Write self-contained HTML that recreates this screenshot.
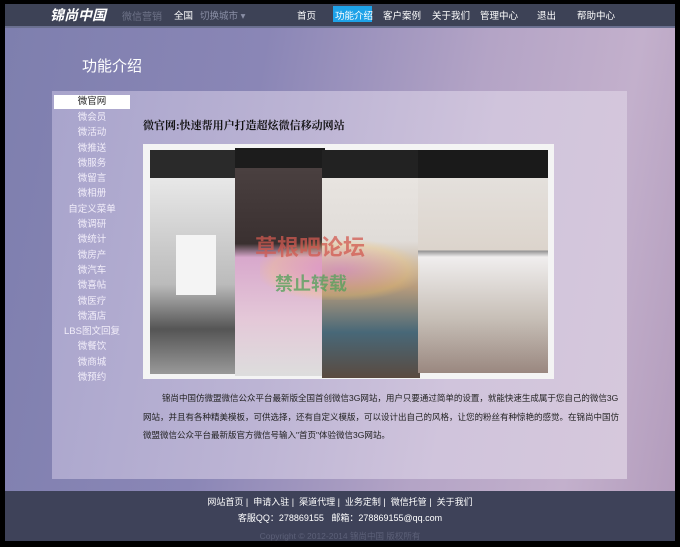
<!DOCTYPE html>
<html><head><meta charset="utf-8"><style>
*{margin:0;padding:0;box-sizing:border-box}
body{width:680px;height:547px;background:#000;font-family:"Liberation Sans","Noto Sans CJK SC",sans-serif;position:relative;overflow:hidden}
.abs{position:absolute}
#hdr{left:5px;top:4px;width:670px;height:24px;background:#3d4256;border-bottom:2px solid #6b7090}
#main{left:5px;top:28px;width:670px;height:463px;background:linear-gradient(100deg,#7e7fae 0%,#8a86b6 35%,#b4a4c6 65%,#c3b0cc 85%,#b39cbc 100%)}
#panel{left:52px;top:91px;width:575px;height:388px;background:linear-gradient(100deg,#a8a4cc 0%,#bcb4d4 40%,#d0c4dc 70%,#d6c8dc 100%)}
#foot{left:5px;top:491px;width:670px;height:50px;background:#3e4259}
.nav{top:8px;font-size:9.5px;color:#fff}
.side{left:54px;width:76px;text-align:center;font-size:9.5px;color:#f2eefa;line-height:14px}
</style></head><body>
<div id="hdr" class="abs"></div>
<div class="abs" style="left:50px;top:5px;font-size:14px;font-weight:bold;font-style:italic;color:#fff">锦尚中国</div>
<div class="abs" style="left:122px;top:8px;font-size:10px;color:#6e7388">微信营销</div>
<div class="abs nav" style="left:174px">全国</div>
<div class="abs nav" style="left:200px;color:#8a8fa6">切换城市 ▾</div>
<div class="abs nav" style="left:297px">首页</div>
<div class="abs" style="left:333px;top:6px;width:39px;height:16px;background:#1ea2e8"></div>
<div class="abs nav" style="left:335px">功能介绍</div>
<div class="abs nav" style="left:383px">客户案例</div>
<div class="abs nav" style="left:432px">关于我们</div>
<div class="abs nav" style="left:480px">管理中心</div>
<div class="abs nav" style="left:537px">退出</div>
<div class="abs nav" style="left:577px">帮助中心</div>
<div id="main" class="abs"></div>
<div class="abs" style="left:82px;top:55px;font-size:15px;color:#fff">功能介绍</div>
<div id="panel" class="abs"></div>
<div class="abs" style="left:54px;top:95px;width:76px;height:14px;background:#fff"></div>
<div class="abs side" style="top:95px;color:#222">微官网</div>
<div class="abs side" style="top:110px;line-height:15.3px">微会员<br>微活动<br>微推送<br>微服务<br>微留言<br>微相册<br>自定义菜单<br>微调研<br>微统计<br>微房产<br>微汽车<br>微喜帖<br>微医疗<br>微酒店<br>LBS图文回复<br>微餐饮<br>微商城<br>微预约</div>
<div class="abs" style="left:143px;top:117px;font-size:11px;font-weight:bold;color:#111;font-family:'Liberation Serif','Noto Serif CJK SC',serif">微官网:快速帮用户打造超炫微信移动网站</div>
<div class="abs" style="left:143px;top:144px;width:411px;height:235px;background:#f4f4f4"></div>
<div class="abs" style="left:150px;top:150px;width:90px;height:224px;background:linear-gradient(#2a2a2a 0,#2a2a2a 28px,#e8e8e8 28px,#bbb 60%,#555 80%,#999 100%)"></div>
<div class="abs" style="left:176px;top:235px;width:40px;height:60px;background:#f4f4f4"></div>
<div class="abs" style="left:235px;top:148px;width:90px;height:228px;background:linear-gradient(#1c1c1c 0,#1c1c1c 20px,#4a4040 20px,#3a3030 42%,#d8a8cc 48%,#e4c8d8 75%,#ddd 100%)"></div>
<div class="abs" style="left:322px;top:150px;width:98px;height:228px;background:linear-gradient(#222 0,#222 28px,#e8e4e0 28px,#e0dcd8 40%,#b89c7c 60%,#486878 80%,#5a4a40 100%)"></div>
<div class="abs" style="left:418px;top:150px;width:130px;height:223px;background:linear-gradient(#1a1a1a 0,#1a1a1a 28px,#e4e0dc 28px,#dcd4cc 45%,#8a8a8a 45%,#f0eeee 48%,#c8c0b8 75%,#9a8880 100%)"></div>
<div class="abs" style="left:260px;top:240px;width:160px;height:60px;background:radial-gradient(ellipse,rgba(220,120,200,.5),rgba(255,200,100,.25) 60%,transparent 75%)"></div>
<div class="abs" style="left:255px;top:230px;font-size:22px;font-weight:bold;color:rgba(210,90,80,.75)">草根吧论坛</div>
<div class="abs" style="left:275px;top:270px;font-size:18px;font-weight:bold;color:rgba(80,160,90,.75)">禁止转载</div>
<div class="abs" style="left:143px;top:389px;width:480px;font-size:8.5px;line-height:18.5px;color:#222;text-indent:19px">锦尚中国仿微盟微信公众平台最新版全国首创微信3G网站，用户只要通过简单的设置，就能快速生成属于您自己的微信3G网站，并且有各种精美模板，可供选择，还有自定义模版，可以设计出自己的风格，让您的粉丝有种惊艳的感觉。在锦尚中国仿微盟微信公众平台最新版官方微信号输入"首页"体验微信3G网站。</div>
<div id="foot" class="abs"></div>
<div class="abs" style="left:0;width:680px;top:495px;text-align:center;font-size:9px;color:#fff">网站首页 | &nbsp;申请入驻 | &nbsp;渠道代理 | &nbsp;业务定制 | &nbsp;微信托管 | &nbsp;关于我们</div>
<div class="abs" style="left:0;width:680px;top:511px;text-align:center;font-size:9px;color:#fff">客服QQ：278869155 &nbsp;&nbsp;邮箱：278869155@qq.com</div>
<div class="abs" style="left:0;width:680px;top:530px;text-align:center;font-size:8.5px;color:#5c6078">Copyright © 2012-2014 锦尚中国 版权所有</div>
</body></html>
